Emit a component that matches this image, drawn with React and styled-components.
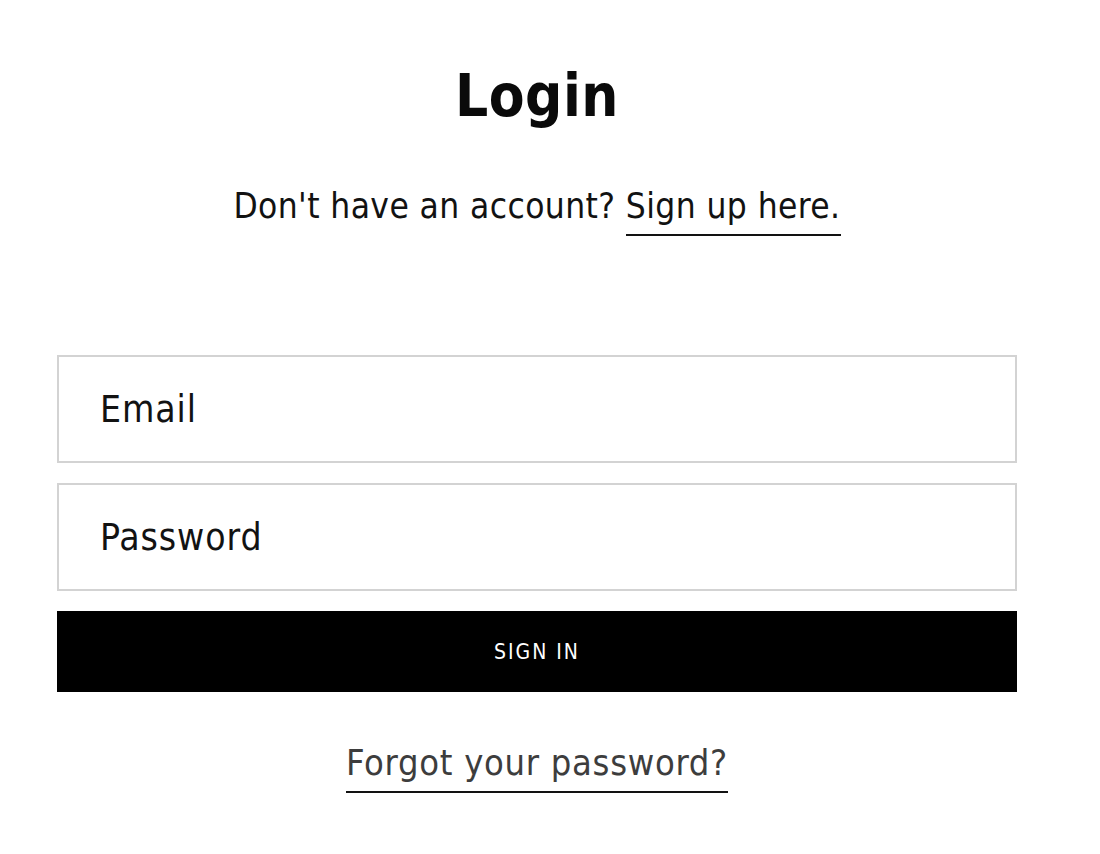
import React from "react";
import styled, { createGlobalStyle } from "styled-components";

const Global = createGlobalStyle`
  html, body { margin: 0; padding: 0; background: #fff; }
  body { font-family: "DejaVu Sans Condensed", "DejaVu Sans", sans-serif; color: #121212; }
  * { box-sizing: border-box; }
`;

const Page = styled.main`
  width: 960px;
  margin-left: 57px;
  padding-top: 56px;
  display: flex;
  flex-direction: column;
  align-items: center;
`;

const Title = styled.h1`
  margin: 0;
  font-size: 58px;
  line-height: 80px;
  font-weight: 700;
  letter-spacing: 0.5px;
  color: #0a0a0a;
`;

const Lead = styled.p`
  margin: 48px 0 0;
  font-size: 35px;
  line-height: 44px;
  letter-spacing: 0.4px;
`;

const TextLink = styled.a`
  color: ${(p) => p.$color || "#121212"};
  text-decoration: none;
  display: inline-block;
  padding-bottom: 6px;
  border-bottom: 2px solid #121212;
  line-height: 44px;
`;

const Form = styled.form`
  width: 100%;
  margin-top: 119px;
  display: flex;
  flex-direction: column;
  gap: 20px;
`;

const Field = styled.input`
  width: 100%;
  height: 108px;
  border: 2px solid #d3d3d3;
  padding: 0 41px;
  font-family: inherit;
  font-size: 37px;
  letter-spacing: 0.9px;
  color: #121212;
  outline: none;
  &::placeholder { color: #121212; opacity: 1; }
`;

const Button = styled.button`
  width: 100%;
  height: 81px;
  border: none;
  background: #000;
  color: #fff;
  font-family: inherit;
  font-size: 21px;
  letter-spacing: 2px;
  cursor: pointer;
`;

const Footer = styled.div`
  margin-top: 49px;
  font-size: 36px;
  letter-spacing: 0.7px;
`;

export default function App() {
  return (
    <>
      <Global />
      <Page>
        <Title>Login</Title>
        <Lead>
          Don't have an account? <TextLink href="#">Sign up here.</TextLink>
        </Lead>
        <Form onSubmit={(e) => e.preventDefault()}>
          <Field type="email" placeholder="Email" />
          <Field type="password" placeholder="Password" />
          <Button type="submit">SIGN IN</Button>
        </Form>
        <Footer>
          <TextLink href="#" $color="#3d3d3d">Forgot your password?</TextLink>
        </Footer>
      </Page>
    </>
  );
}
